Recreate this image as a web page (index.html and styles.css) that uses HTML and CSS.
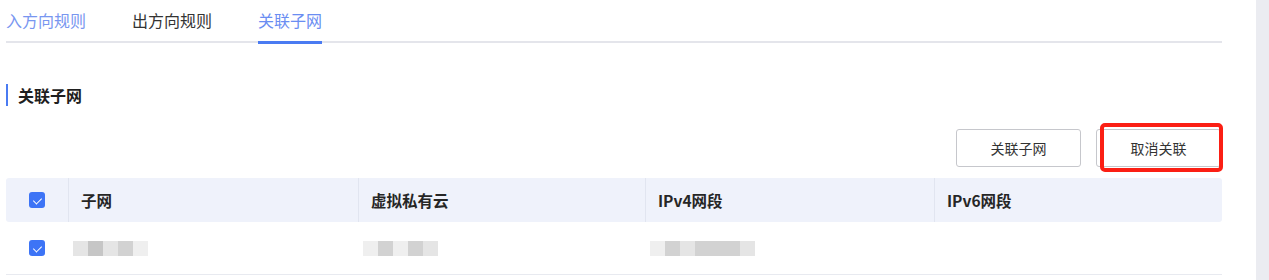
FILE: index.html
```html
<!DOCTYPE html>
<html lang="zh-CN">
<head>
    <meta charset="UTF-8">
    <meta name="viewport" content="width=device-width, initial-scale=1.0">
    <title>关联子网</title>
    <link rel="stylesheet" href="styles.css">
</head>
<body>

    <div class="page">
        <div class="main">
            <!-- Tabs -->
            <div class="tabs">
                <div class="tab tab-hover">入方向规则</div>
                <div class="tab">出方向规则</div>
                <div class="tab active">关联子网</div>
            </div>

            <!-- Section title -->
            <div class="section-title">关联子网</div>

            <!-- Toolbar -->
            <div class="toolbar">
                <button class="btn">关联子网</button>
                <div class="btn-wrap">
                    <button class="btn">取消关联</button>
                    <span class="highlight"></span>
                </div>
            </div>

            <!-- Subnet table -->
            <div class="table">
                <div class="row head">
                    <div class="cell check"><span class="checkbox"></span></div>
                    <div class="cell">子网</div>
                    <div class="cell">虚拟私有云</div>
                    <div class="cell">IPv4网段</div>
                    <div class="cell">IPv6网段</div>
                </div>
                <div class="row body">
                    <div class="cell check"><span class="checkbox"></span></div>
                    <div class="cell">
                        <div class="blur"><span class="s1"></span><span class="s3"></span><span class="s1"></span><span class="s2"></span><span class="s0"></span></div>
                    </div>
                    <div class="cell">
                        <div class="blur"><span class="s0"></span><span class="s2"></span><span class="s0"></span><span class="s2"></span><span class="s1"></span></div>
                    </div>
                    <div class="cell">
                        <div class="blur"><span class="s0"></span><span class="s2"></span><span class="s1"></span><span class="s2"></span><span class="s2"></span><span class="s2"></span><span class="s1"></span></div>
                    </div>
                    <div class="cell"></div>
                </div>
            </div>
        </div>

        <div class="scrollbar"></div>
    </div>

</body>
</html>
```

FILE: styles.css
```css
/* General Reset */
* {
    margin: 0;
    padding: 0;
    box-sizing: border-box;
}

body {
    background-color: #ffffff;
    color: #252b3a;
    font-family: "Noto Sans CJK SC", "Noto Sans", sans-serif;
}

/* Page Layout */
.page {
    display: flex;
    height: 280px;
}

.main {
    flex: 1;
    padding: 0 34px 0 6px;
}

.scrollbar {
    width: 13px;
    background-color: #ebecf1;
}

/* Tabs */
.tabs {
    display: flex;
    height: 43px;
    border-bottom: 2px solid #e4e5eb;
}

.tab {
    height: 44px;
    padding-top: 9px;
    margin-right: 46px;
    font-size: 16px;
    line-height: 22px;
    color: #333333;
    border-bottom: 3px solid transparent;
}

.tab-hover {
    color: #7896f0;
}

.tab.active {
    color: #6a8df2;
    border-bottom-color: #4a7bf2;
}

/* Section Title */
.section-title {
    margin-top: 41px;
    height: 22px;
    padding-left: 10px;
    border-left: 2px solid #4a7bf2;
    font-size: 16px;
    font-weight: bold;
    line-height: 22px;
    color: #1f1f1f;
}

/* Toolbar */
.toolbar {
    display: flex;
    justify-content: flex-end;
    gap: 15px;
    margin-top: 23px;
    padding-right: 1px;
}

.btn-wrap {
    position: relative;
}

.btn {
    display: block;
    width: 125px;
    height: 38px;
    font-family: inherit;
    font-size: 14px;
    color: #333333;
    background-color: #ffffff;
    border: 1px solid #c6c7cc;
    border-radius: 3px;
}

.highlight {
    position: absolute;
    left: 4px;
    top: -6px;
    width: 123px;
    height: 49px;
    border: 4px solid #fb1f14;
    border-radius: 5px;
}

/* Table */
.table {
    margin-top: 11px;
}

.row {
    display: grid;
    grid-template-columns: 62px 290px 287px 289px 1fr;
}

.row.head {
    height: 44px;
    background-color: #eff2fb;
    border-radius: 3px;
    font-size: 15.5px;
    font-weight: bold;
    color: #262626;
}

.row.head .cell + .cell {
    border-left: 1px solid #e1e5f0;
}

.row.body {
    height: 53px;
    border-bottom: 1px solid #e8eaf0;
    font-size: 14px;
}

.cell {
    display: flex;
    align-items: center;
    padding-left: 12px;
}

.row.body .cell {
    padding-left: 5px;
}

.cell.check {
    justify-content: center;
    padding-left: 0 !important;
}

/* Checkbox */
.checkbox {
    position: relative;
    width: 16px;
    height: 16px;
    background-color: #3d74f6;
    border-radius: 3px;
}

.checkbox::after {
    content: "";
    position: absolute;
    left: 5.5px;
    top: 3.5px;
    width: 4px;
    height: 7px;
    border-right: 1px solid #ffffff;
    border-bottom: 1px solid #ffffff;
    transform: rotate(45deg);
}

/* Blurred placeholder text */
.blur {
    display: flex;
    height: 15px;
}

.blur span {
    width: 15px;
    height: 15px;
}

.s0 { background-color: #efefef; }
.s1 { background-color: #e5e5e5; }
.s2 { background-color: #d2d2d2; }
.s3 { background-color: #c6c6c6; }
```
